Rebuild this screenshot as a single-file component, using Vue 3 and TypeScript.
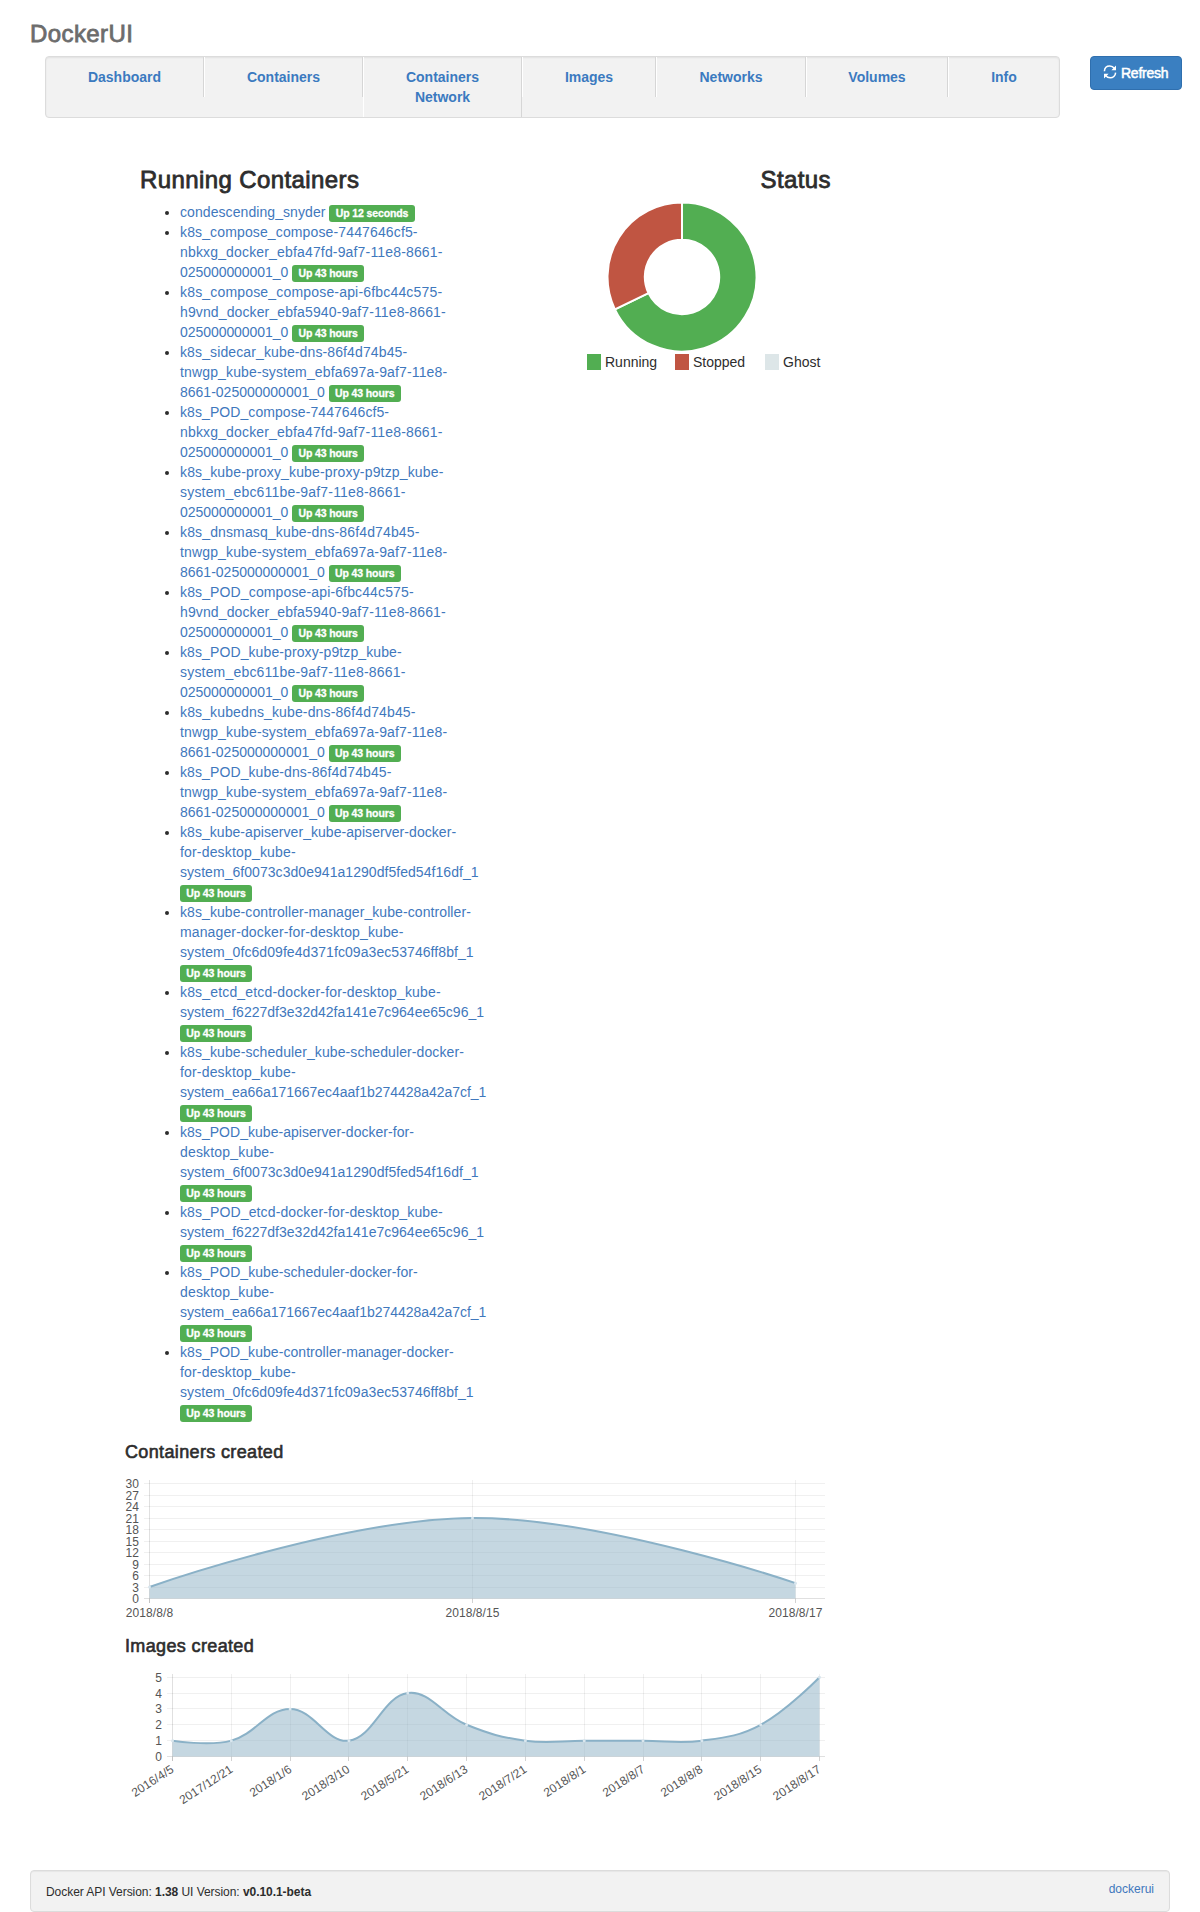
<script setup lang="ts">
interface Container { lines: string[]; status: string; wrapBadge?: boolean }
interface Point { x: number; y: number }

const nav = [
  { label: 'Dashboard', width: 158 },
  { label: 'Containers', width: 159 },
  { label: 'Containers Network', width: 159 },
  { label: 'Images', width: 134 },
  { label: 'Networks', width: 150 },
  { label: 'Volumes', width: 142 },
  { label: 'Info', width: 111 },
]

const up = 'Up 43 hours'
const api = 'system_6f0073c3d0e941a1290df5fed54f16df_1'
const ctrl = 'system_0fc6d09fe4d371fc09a3ec53746ff8bf_1'
const etcd = 'system_f6227df3e32d42fa141e7c964ee65c96_1'
const sched = 'system_ea66a171667ec4aaf1b274428a42a7cf_1'
const dns = ['tnwgp_kube-system_ebfa697a-9af7-11e8-', '8661-025000000001_0']

const containers: Container[] = [
  { lines: ['condescending_snyder'], status: 'Up 12 seconds' },
  { lines: ['k8s_compose_compose-7447646cf5-', 'nbkxg_docker_ebfa47fd-9af7-11e8-8661-', '025000000001_0'], status: up },
  { lines: ['k8s_compose_compose-api-6fbc44c575-', 'h9vnd_docker_ebfa5940-9af7-11e8-8661-', '025000000001_0'], status: up },
  { lines: ['k8s_sidecar_kube-dns-86f4d74b45-', ...dns], status: up },
  { lines: ['k8s_POD_compose-7447646cf5-', 'nbkxg_docker_ebfa47fd-9af7-11e8-8661-', '025000000001_0'], status: up },
  { lines: ['k8s_kube-proxy_kube-proxy-p9tzp_kube-', 'system_ebc611be-9af7-11e8-8661-', '025000000001_0'], status: up },
  { lines: ['k8s_dnsmasq_kube-dns-86f4d74b45-', ...dns], status: up },
  { lines: ['k8s_POD_compose-api-6fbc44c575-', 'h9vnd_docker_ebfa5940-9af7-11e8-8661-', '025000000001_0'], status: up },
  { lines: ['k8s_POD_kube-proxy-p9tzp_kube-', 'system_ebc611be-9af7-11e8-8661-', '025000000001_0'], status: up },
  { lines: ['k8s_kubedns_kube-dns-86f4d74b45-', ...dns], status: up },
  { lines: ['k8s_POD_kube-dns-86f4d74b45-', ...dns], status: up },
  { lines: ['k8s_kube-apiserver_kube-apiserver-docker-', 'for-desktop_kube-', api], status: up, wrapBadge: true },
  { lines: ['k8s_kube-controller-manager_kube-controller-', 'manager-docker-for-desktop_kube-', ctrl], status: up, wrapBadge: true },
  { lines: ['k8s_etcd_etcd-docker-for-desktop_kube-', etcd], status: up, wrapBadge: true },
  { lines: ['k8s_kube-scheduler_kube-scheduler-docker-', 'for-desktop_kube-', sched], status: up, wrapBadge: true },
  { lines: ['k8s_POD_kube-apiserver-docker-for-', 'desktop_kube-', api], status: up, wrapBadge: true },
  { lines: ['k8s_POD_etcd-docker-for-desktop_kube-', etcd], status: up, wrapBadge: true },
  { lines: ['k8s_POD_kube-scheduler-docker-for-', 'desktop_kube-', sched], status: up, wrapBadge: true },
  { lines: ['k8s_POD_kube-controller-manager-docker-', 'for-desktop_kube-', ctrl], status: up, wrapBadge: true },
]

/* Helvetica Neue minus Arial advance widths, in 1/1000 em; used to track each line */
const advanceDelta: Record<string, number> = {
  a: -19, b: 37, c: 37, d: 37, e: -19, f: 18, g: 18, k: 19, m: 20, o: 18, p: 37, q: 37,
  t: 37, w: 36, x: 18, z: -20, O: -18, D: -18, '-': 56, _: -56,
}
/* Kerning pairs that differ between the two faces */
const pairDelta: Record<string, number> = { '11': 80, 'r-': -50 }
function tracking(line: string): string {
  let sum = 0
  for (const ch of line) sum += advanceDelta[ch] ?? 0
  for (const pair in pairDelta) sum += pairDelta[pair] * (line.split(pair).length - 1)
  return (sum / 1000 / line.length).toFixed(5) + 'em'
}

const legend = [
  { label: 'Running', color: '#52ae52', width: 88 },
  { label: 'Stopped', color: '#c05542', width: 90 },
  { label: 'Ghost', color: '#dde6e8', width: 80 },
]

/* Doughnut slices */
function slice(from: number, to: number): string {
  const at = (f: number, r: number) => {
    const a = f * 2 * Math.PI - Math.PI / 2
    return `${(75 + r * Math.cos(a)).toFixed(2)} ${(75 + r * Math.sin(a)).toFixed(2)}`
  }
  const big = to - from > 0.5 ? 1 : 0
  return `M${at(from, 74.5)}A74.5 74.5 0 ${big} 1 ${at(to, 74.5)}L${at(to, 37.2)}A37.2 37.2 0 ${big} 0 ${at(from, 37.2)}Z`
}
const split = 19 / 28
const runningSlice = slice(0, split)
const stoppedSlice = slice(split, 1)

/* Line charts: smooth curve with tension 0.4, flat tension at both ends */
function curve(pts: Point[]): string {
  const ctl = pts.map((p, i) => {
    const a = pts[i - 1] ?? p
    const b = pts[i + 1] ?? p
    const t = i > 0 && i < pts.length - 1 ? 0.4 : 0
    const d1 = Math.hypot(p.x - a.x, p.y - a.y)
    const d2 = Math.hypot(b.x - p.x, b.y - p.y)
    const f1 = (t * d1) / (d1 + d2)
    const f2 = (t * d2) / (d1 + d2)
    return {
      ix: p.x - f1 * (b.x - a.x), iy: p.y - f1 * (b.y - a.y),
      ox: p.x + f2 * (b.x - a.x), oy: p.y + f2 * (b.y - a.y),
    }
  })
  return pts.map((p, i) => i === 0
    ? `M${p.x} ${p.y}`
    : `C${ctl[i - 1].ox} ${ctl[i - 1].oy} ${ctl[i].ix} ${ctl[i].iy} ${p.x} ${p.y}`).join('')
}

function chart(x0: number, x1: number, base: number, unit: number, labels: string[], values: number[], ticks: number[]) {
  const step = (x1 - x0) / (labels.length - 1)
  const pts = values.map((v, i) => ({ x: x0 + i * step, y: base - v * unit }))
  const line = curve(pts)
  return {
    pts,
    line,
    area: `${line}L${x1} ${base}L${x0} ${base}Z`,
    left: x0 - 5.5,
    base,
    cols: labels.map((label, i) => ({ label, x: Math.floor(x0 + i * step) + 0.5 })),
    rows: ticks.map(v => ({ v, y: Math.floor(base - v * unit) + 0.5 })),
  }
}

const created = chart(24.5, 670.5, 123.5, 11.5 / 3, ['2018/8/8', '2018/8/15', '2018/8/17'],
  [3, 21, 4], [0, 3, 6, 9, 12, 15, 18, 21, 24, 27, 30])
const images = chart(47.5, 694.5, 86.5, 15.85,
  ['2016/4/5', '2017/12/21', '2018/1/6', '2018/3/10', '2018/5/21', '2018/6/13', '2018/7/21', '2018/8/1', '2018/8/7', '2018/8/8', '2018/8/15', '2018/8/17'],
  [1, 1, 3, 1, 4, 2, 1, 1, 1, 1, 2, 5], [0, 1, 2, 3, 4, 5])
</script>

<template>
  <div class="page">
    <h3 class="brand">DockerUI</h3>
    <header class="masthead">
      <ul class="nav">
        <li v-for="(n, i) in nav" :key="i" :style="{ width: n.width + 'px' }"><a>{{ n.label }}</a></li>
      </ul>
      <button class="refresh">
        <svg width="14" height="14" viewBox="0 0 14 14">
          <path d="M1.4 6.2C1.6 3 4 1.1 6.8 1.1c1.9 0 3.4.8 4.4 2.2M12.6 7.6c-.2 3.2-2.6 5.2-5.4 5.2-1.9 0-3.5-.9-4.5-2.3" fill="none" stroke="#fff" stroke-width="1.5" />
          <path d="M13 .6v4.6H8.4zM1 13.4V8.8h4.6z" fill="#fff" />
        </svg>
        <span>Refresh</span>
      </button>
    </header>

    <main class="content">
      <div class="columns">
        <section class="running">
          <h3>Running Containers</h3>
          <ul>
            <li v-for="(c, i) in containers" :key="i">
              <a><template v-for="(l, j) in c.lines" :key="j"><br v-if="j > 0"><span :style="{ letterSpacing: tracking(l) }">{{ l }}</span></template></a>
              <br v-if="c.wrapBadge">
              {{ ' ' }}<span class="label">{{ c.status }}</span>
            </li>
          </ul>
        </section>
        <section class="status">
          <h3>Status</h3>
          <svg class="doughnut" width="150" height="150" viewBox="0 0 150 150">
            <g stroke="#fff" stroke-width="2">
              <path :d="runningSlice" fill="#52ae52" />
              <path :d="stoppedSlice" fill="#c05542" />
            </g>
          </svg>
          <div class="legend">
            <div v-for="l in legend" :key="l.label" class="key" :style="{ width: l.width + 'px' }">
              <i :style="{ background: l.color }"></i>{{ l.label }}
            </div>
          </div>
        </section>
      </div>

      <h4>Containers created</h4>
      <svg class="chart first" width="710" height="150" viewBox="0 0 710 150">
        <g class="grid">
          <path v-for="r in created.rows" :key="r.v" :d="`M${created.left} ${r.y}H700`" :class="{ axis: r.v === 0 }" />
          <path v-for="(c, i) in created.cols" :key="i" :d="`M${c.x} 5V128`" :class="{ axis: i === 0 }" />
          <path v-for="(c, i) in created.cols" :key="'t' + i" :d="`M${c.x} 124V128`" class="axis" />
        </g>
        <text v-for="r in created.rows" :key="r.v" x="14" :y="r.y + 4" text-anchor="end">{{ r.v }}</text>
        <text v-for="c in created.cols" :key="c.label" :x="c.x" y="142" text-anchor="middle">{{ c.label }}</text>
        <path :d="created.area" class="area" />
        <path :d="created.line" class="line" />
        <circle v-for="(p, i) in created.pts" :key="i" :cx="p.x" :cy="p.y" r="1.5" class="dot" />
      </svg>

      <h4 class="second-title">Images created</h4>
      <svg class="chart second" width="710" height="150" viewBox="0 0 710 150">
        <g class="grid">
          <path v-for="r in images.rows" :key="r.v" :d="`M${images.left} ${r.y}H700`" :class="{ axis: r.v === 0 }" />
          <path v-for="(c, i) in images.cols" :key="i" :d="`M${c.x} 4V91`" :class="{ axis: i === 0 }" />
          <path v-for="(c, i) in images.cols" :key="'t' + i" :d="`M${c.x} 87V91`" class="axis" />
        </g>
        <text v-for="r in images.rows" :key="r.v" x="37" :y="r.y + 4" text-anchor="end">{{ r.v }}</text>
        <text v-for="c in images.cols" :key="c.label" :transform="`translate(${c.x} 98) rotate(-33)`" y="4" text-anchor="end">{{ c.label }}</text>
        <path :d="images.area" class="area" />
        <path :d="images.line" class="line" />
        <circle v-for="(p, i) in images.pts" :key="i" :cx="p.x" :cy="p.y" r="1.5" class="dot" />
      </svg>
    </main>

    <footer class="footer">
      <p>Docker API Version: <strong>1.38</strong> UI Version: <strong>v0.10.1-beta</strong></p>
      <a>dockerui</a>
    </footer>
  </div>
</template>

<style>
body { margin: 0; background: #fff; }
</style>

<style scoped>
* { box-sizing: border-box; }
.page {
  display: flex;
  flex-direction: column;
  width: 1200px;
  height: 1912px;
  overflow: hidden;
  font: 14px/20px "Liberation Sans", Arial, sans-serif;
  color: #2d2d2d;
}
h3, h4, p, ul { margin: 0; padding: 0; }
h3, h4 { font-weight: 400; -webkit-text-stroke: 0.8px currentColor; }
h3 { font-size: 24px; line-height: 26px; letter-spacing: 0.4px; }
h4 { font-size: 18px; line-height: 20px; letter-spacing: 0.36px; -webkit-text-stroke-width: 0.6px; }
a { color: #3f78bd; text-decoration: none; }
.brand { padding: 21px 0 9px 30px; color: #6c6c6c; }
.masthead { display: flex; align-items: flex-start; padding-left: 45px; }
.nav {
  display: flex;
  align-items: flex-start;
  width: 1015px;
  height: 62px;
  list-style: none;
  background: #f2f2f2;
  border: 1px solid #dcdcdc;
  border-radius: 4px;
  box-shadow: inset 0 1px 2px rgba(0, 0, 0, 0.07);
}
.nav li { text-align: center; font-weight: 700; border-left: 1px solid #fff; border-right: 1px solid #d6d6d6; padding: 10px 34px; }
.nav li:first-child { border-left: 0; }
.nav li:last-child { border-right: 0; }
.nav a { color: #3b7ac0; }
.refresh {
  display: flex;
  align-items: center;
  gap: 4px;
  width: 92px;
  height: 34px;
  margin-left: 30px;
  padding: 0 12px;
  font: inherit;
  line-height: 20px;
  color: #fff;
  background: #3a7fc1;
  border: 1px solid #2f6fae;
  border-radius: 4px;
}
.refresh span { letter-spacing: -0.25px; -webkit-text-stroke: 0.5px #fff; }
.refresh svg { position: relative; top: -1px; }
.content { padding: 49px 0 0 125px; }
.columns { display: flex; }
.running { width: 390px; padding-left: 15px; height: 1275px; }
.running ul { padding: 9px 0 0 40px; }
.running li { white-space: nowrap; }
.label {
  padding: 2.1px 6.3px 3.15px;
  font-size: 10.5px;
  line-height: 10.5px;
  font-weight: 700;
  letter-spacing: -0.12px;
  -webkit-text-stroke: 0.3px #fff;
  color: #fff;
  background: #52ae52;
  border-radius: 3px;
}
.status { display: flex; flex-direction: column; }
.status h3 { padding-left: 245.5px; }
.doughnut { margin: 9px 0 0 92px; }
.legend { display: flex; padding: 0 0 0 72px; margin-top: 0; }
.key { display: flex; align-items: center; gap: 4px; }
.key i { width: 14px; height: 16px; }
.chart { display: block; }
.chart text { font-size: 12px; letter-spacing: 0.08px; fill: #555; }
.first { margin-top: 13px; }
.second { margin-top: 14px; }
.second-title { margin-top: 11px; }
.grid path { stroke: rgba(0, 0, 0, 0.06); stroke-width: 1; fill: none; }
.grid .axis { stroke: rgba(0, 0, 0, 0.12); }
.area { fill: rgba(139, 176, 195, 0.5); }
.line { fill: none; stroke: #8ab1c7; stroke-width: 2; }
.dot { fill: #d9e6ee; }
.footer {
  display: flex;
  justify-content: space-between;
  width: 1140px;
  height: 42px;
  margin: auto 0 0 30px;
  padding: 8px 15px 0 15px;
  font-size: 12px;
  background: #f2f2f2;
  border: 1px solid #dcdcdc;
  border-radius: 4px;
  box-shadow: inset 0 1px 1px rgba(0, 0, 0, 0.05);
}
.footer p { padding-top: 3px; letter-spacing: -0.05px; }
</style>
